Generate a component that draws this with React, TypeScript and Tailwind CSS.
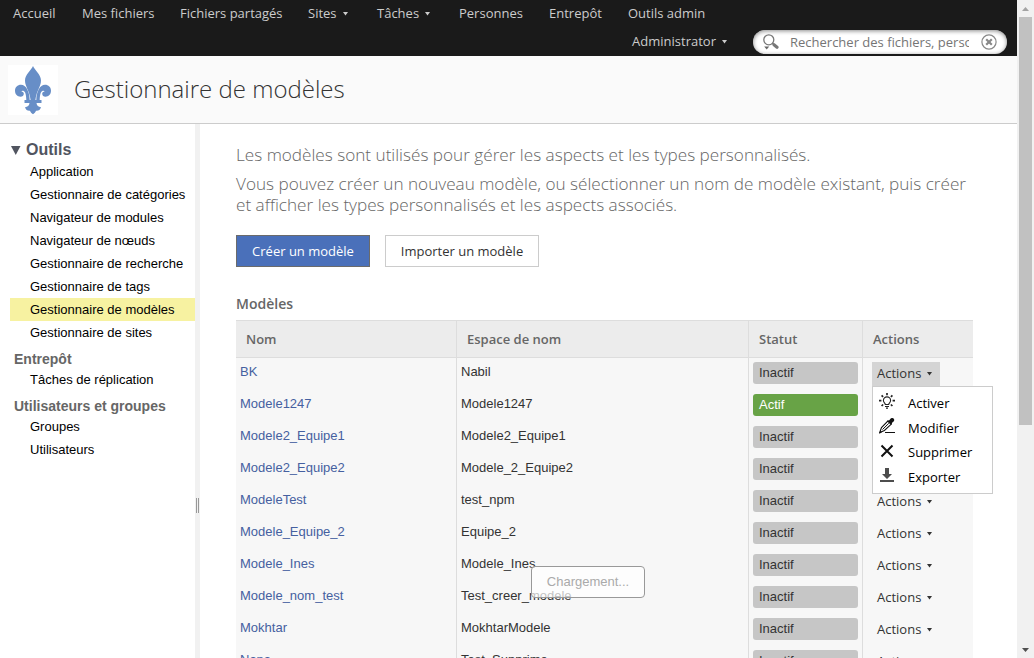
import React from "react";

const OPEN = "font-['Open_Sans',sans-serif]";
const ARIAL = "font-['Liberation_Sans',Arial,sans-serif]";

function Caret({ className = "" }: { className?: string }) {
  return (
    <svg width="5" height="4" viewBox="0 0 5 4" className={className} fill="currentColor">
      <path d="M0 0h5L2.500 3.500z" />
    </svg>
  );
}

const navItems = [
  { label: "Accueil", width: "w-[69px]" },
  { label: "Mes fichiers", width: "w-[98px]" },
  { label: "Fichiers partagés", width: "w-[128px]" },
  { label: "Sites", width: "w-[69px]", menu: true },
  { label: "Tâches", width: "w-[82px]", menu: true },
  { label: "Personnes", width: "w-[90px]" },
  { label: "Entrepôt", width: "w-[79px]" },
  { label: "Outils admin", width: "w-[90px]" },
];

function TopBar() {
  return (
    <header className={`${OPEN} h-14 bg-[#1a1a1a] text-[13px] text-[#ccc]`}>
      <nav className="flex h-7 pb-[2px] pl-[13px]">
        {navItems.map((n) => (
          <a key={n.label} className={`flex shrink-0 items-center whitespace-nowrap leading-[26px] ${n.width}`}>
            {n.label}
            {n.menu && <Caret className="ml-[6px] mt-px" />}
          </a>
        ))}
      </nav>
      <div className="flex h-7 items-center justify-end pr-[10px]">
        <a className="mr-[26px] flex items-center pb-[2px] leading-[26px]">
          Administrator
          <Caret className="ml-[6px] mt-px" />
        </a>
        <div className="flex h-6 w-[254px] items-center rounded-full bg-white pl-[10px] shadow-[inset_0_1px_4px_#888]">
          <svg width="16" height="16" viewBox="0 0 16 16" fill="none" className="shrink-0">
            <circle cx="5.800" cy="5.800" r="5" stroke="#777" strokeWidth="1.300" />
            <path d="M9.400 9.200l1.800 1.600" stroke="#777" strokeWidth="1.400" />
            <path d="M11 10.800l3 2.400" stroke="#777" strokeWidth="3.200" strokeLinecap="round" />
            <path d="M1.200 12.600h5l-2.500 2.800z" fill="#666" />
          </svg>
          <span className="ml-[11px] w-[179px] overflow-hidden whitespace-nowrap leading-5 text-[#757575]">
            Rechercher des fichiers, personnes, sites
          </span>
          <svg width="16" height="16" viewBox="0 0 16 16" fill="none" className="ml-[12px] shrink-0">
            <circle cx="8" cy="8" r="7.100" stroke="#888" strokeWidth="1.200" />
            <path d="M5.200 5.200l5.600 5.600M10.800 5.200l-5.600 5.600" stroke="#888" strokeWidth="2.200" />
          </svg>
        </div>
      </div>
    </header>
  );
}

function FleurDeLis() {
  return (
    <svg width="50" height="50" viewBox="0 0 50 50" className="bg-white" fill="#678ec7">
      <path d="M25 1c-1.500 4-8 8.500-8 14.500 0 6 4.500 10 5.600 19.500h4.800c1.100-9.500 5.600-13.500 5.600-19.500C33 9.500 26.500 5 25 1z" />
      <path d="M21.700 35c-.2-8.500-3.600-15.200-8.700-15.200-3.500 0-6 2.500-6 6 0 3.500 2.500 5.900 5.500 5.900 1.900 0 3.300-1.100 3.300-2.900 0-1.400-1-2.200-2.400-2.300.3-1.300 2.700-1.200 3.700 1 .8 1.900 1.200 4.700 1.200 7.500z" />
      <path d="M28.300 35c.2-8.500 3.600-15.200 8.700-15.200 3.500 0 6 2.500 6 6 0 3.500-2.500 5.900-5.500 5.900-1.900 0-3.300-1.100-3.300-2.900 0-1.400 1-2.200 2.400-2.300-.3-1.300-2.700-1.200-3.700 1-.8 1.900-1.200 4.700-1.200 7.500z" />
      <path d="M16.500 35h17v3h-17z" />
      <path d="M21.500 38h7c.3 2.500 1.800 3.800 4.500 4.200-.8 2.600-2.500 3.800-5 3.500-.5 1.300-1.600 2.500-3 3.600-1.400-1.100-2.500-2.300-3-3.600-2.500.3-4.200-.9-5-3.500 2.700-.4 4.200-1.700 4.500-4.200z" />
    </svg>
  );
}

const toolItems = [
  "Application",
  "Gestionnaire de catégories",
  "Navigateur de modules",
  "Navigateur de nœuds",
  "Gestionnaire de recherche",
  "Gestionnaire de tags",
  "Gestionnaire de modèles",
  "Gestionnaire de sites",
];

function SideItem({ label, active = false }: { label: string; active?: boolean }) {
  return (
    <li className={`h-[23px] whitespace-nowrap pl-5 text-[13px] leading-[23px] text-black ${active ? "bg-[#f7f2a1]" : ""}`}>
      {label}
    </li>
  );
}

function Sidebar() {
  return (
    <aside className={`${ARIAL} w-[195px] shrink-0 pl-[10px] pt-[15px]`}>
      <h2 className="flex h-[21px] items-center text-[16px] font-bold leading-[21px] text-[#515560]">
        <svg width="10" height="9" viewBox="0 0 10 9" fill="#515560" className="ml-px mr-[5px] mt-[2px]">
          <path d="M0 0h9.500L4.750 9z" />
        </svg>
        Outils
      </h2>
      <ul>
        {toolItems.map((t) => (
          <SideItem key={t} label={t} active={t === "Gestionnaire de modèles"} />
        ))}
      </ul>
      <h3 className="h-6 whitespace-nowrap pl-[4px] pt-[3px] text-[14px] font-bold leading-[24px] text-[#666]">Entrepôt</h3>
      <ul>
        <SideItem label="Tâches de réplication" />
      </ul>
      <h3 className="h-6 whitespace-nowrap pl-[4px] pt-[3px] text-[14px] font-bold leading-[24px] text-[#666]">Utilisateurs et groupes</h3>
      <ul>
        <SideItem label="Groupes" />
        <SideItem label="Utilisateurs" />
      </ul>
    </aside>
  );
}

const models = [
  { name: "BK", ns: "Nabil", active: false },
  { name: "Modele1247", ns: "Modele1247", active: true },
  { name: "Modele2_Equipe1", ns: "Modele2_Equipe1", active: false },
  { name: "Modele2_Equipe2", ns: "Modele_2_Equipe2", active: false },
  { name: "ModeleTest", ns: "test_npm", active: false },
  { name: "Modele_Equipe_2", ns: "Equipe_2", active: false },
  { name: "Modele_Ines", ns: "Modele_Ines", active: false },
  { name: "Modele_nom_test", ns: "Test_creer_modele", active: false },
  { name: "Mokhtar", ns: "MokhtarModele", active: false },
  { name: "Nana", ns: "Test_Supprime", active: false },
];

const COLS = "grid grid-cols-[220px_292px_114px_111px]";

function ActionsMenu() {
  const row = "flex items-center pl-[6px]";
  return (
    <div className={`${OPEN} absolute left-0 top-6 z-10 h-[108px] w-[121px] border border-[#ccc] bg-white text-[13px] text-black`}>
      <div className={`${row} h-[33px]`}>
        <svg width="16" height="16" viewBox="0 0 16 16" fill="none" stroke="#222" className="-mt-[5px] mr-[13px]">
          <path d="M6.300 11.500c0-1.500-1.900-2-1.900-4a3.600 3.600 0 0 1 7.200 0c0 2-1.900 2.500-1.900 4z" strokeWidth="1.100" />
          <path d="M6 13.500h4M7 15.200h2" strokeWidth="1.200" />
          <path d="M8 0v2.200M2.600 2.300l1.500 1.500M13.400 2.300l-1.500 1.500M0 7.700h2.400M13.600 7.700H16M2.600 13l1.500-1.500M13.400 13l-1.500-1.500" strokeWidth="1.700" />
        </svg>
        Activer
      </div>
      <div className={`${row} h-[17px]`}>
        <svg width="16" height="16" viewBox="0 0 16 16" fill="none" stroke="#111" className="-mt-[5px] mr-[13px]">
          <path d="M.7 14.500l1.800-5L8.800 3l3.300 3.300-6.700 6.200z" strokeWidth="1.100" />
          <path d="M3.500 11.500l6.300-6.200M.5 15l2-.7" strokeWidth="1" />
          <path d="M8.200 2.800l2.100-.5 1.400-1.700c.8-.9 2.100-.8 2.900 0s.9 2.100 0 2.900l-1.500 1.300-.4 2z" fill="#111" stroke="none" />
          <path d="M6 14.500h10" strokeWidth="1" />
        </svg>
        Modifier
      </div>
      <div className={`${row} h-[32px]`}>
        <svg width="16" height="16" viewBox="0 0 16 16" fill="none" stroke="#111" className="-mt-[5px] mr-[13px]">
          <path d="M2.500 2.500l11 11M13.500 2.500l-11 11" strokeWidth="2" />
        </svg>
        Supprimer
      </div>
      <div className={`${row} h-[17px]`}>
        <svg width="16" height="16" viewBox="0 0 16 16" fill="#4d4d4d" className="-mt-[5px] mr-[13px]">
          <path d="M6 1h4v6h3l-5 5-5-5h3zM1 13h14v2H1z" />
        </svg>
        Exporter
      </div>
    </div>
  );
}

function ModelsTable() {
  return (
    <div className="w-[737px]">
      <div className={`${COLS} ${OPEN} h-[38px] border-y border-[#ddd] bg-[#ececec] text-[13px] font-semibold leading-[36px] text-[#666]`}>
        <div className="pl-[10px]">Nom</div>
        <div className="border-l border-[#ddd] pl-[10px]">Espace de nom</div>
        <div className="border-l border-[#ddd] pl-[10px]">Statut</div>
        <div className="border-l border-[#ddd] pl-[10px]">Actions</div>
      </div>
      {models.map((m, i) => (
        <div key={m.name} className={`${COLS} ${ARIAL} h-8 bg-[#f7f7f7] text-[13px] text-[#333]`}>
          <div className="pl-[4px] leading-[27px] text-[#4560a0]">{m.name}</div>
          <div className="border-l border-[#ddd] pl-[4px] leading-[27px]">{m.ns}</div>
          <div className="border-l border-[#ddd] pl-[4px] pt-[4px]">
            <div
              className={`h-[22px] w-[105px] rounded-[3px] pl-[6px] leading-[21px] ${
                m.active ? "bg-[#68a346] text-white" : "bg-[#c6c6c6]"
              }`}
            >
              {m.active ? "Actif" : "Inactif"}
            </div>
          </div>
          <div className="border-l border-[#ddd] pl-[9px] pt-[4px]">
            <div className={`${OPEN} relative flex h-6 w-[68px] items-center pl-[5px] ${i === 0 ? "bg-[#d4d4d4]" : ""}`}>
              Actions
              <Caret className="ml-[6px]" />
              {i === 0 && <ActionsMenu />}
            </div>
          </div>
        </div>
      ))}
    </div>
  );
}

function Scrollbar() {
  return (
    <div className="flex h-[658px] w-[17px] shrink-0 flex-col items-center bg-[#f1f1f1]">
      <div className="flex h-[17px] items-center">
        <svg width="7" height="4" viewBox="0 0 7 4" fill="#a3a3a3">
          <path d="M0 4h7L3.500 0z" />
        </svg>
      </div>
      <div className="h-[408px] w-[13px] bg-[#c1c1c1]" />
      <div className="mt-auto flex h-[17px] items-center">
        <svg width="7" height="4" viewBox="0 0 7 4" fill="#505050">
          <path d="M0 0h7L3.500 4z" />
        </svg>
      </div>
    </div>
  );
}

export default function App() {
  return (
    <div className="relative flex h-[658px] w-[1034px] overflow-hidden bg-white">
      <div className="flex w-[1017px] flex-col">
        <TopBar />
        <div className="flex h-[68px] shrink-0 items-center border-b border-[#ccc] bg-[#fafafa] pl-2">
          <FleurDeLis />
          <h1 className={`${OPEN} mb-[2px] ml-4 text-[24px] font-light leading-[34px] text-[#333]`}>Gestionnaire de modèles</h1>
        </div>
        <div className="flex min-h-0 flex-1 overflow-hidden">
          <Sidebar />
          <div className="flex w-[5px] shrink-0 justify-center gap-px bg-[#f1f1f1] pt-[374px]">
            <span className="h-[15px] w-px bg-[#999]" />
            <span className="h-[15px] w-px bg-[#999]" />
          </div>
          <main className="pl-9 pt-5">
            <div className={`${OPEN} text-[17.15px] font-light leading-[21px] text-[#666]`}>
              <p className="whitespace-nowrap">Les modèles sont utilisés pour gérer les aspects et les types personnalisés.</p>
              <p className="mt-2 whitespace-nowrap">
                Vous pouvez créer un nouveau modèle, ou sélectionner un nom de modèle existant, puis créer
                <br />
                et afficher les types personnalisés et les aspects associés.
              </p>
            </div>
            <div className={`${OPEN} mt-5 flex gap-[15px] text-[13px]`}>
              <button className="h-8 w-[134px] border border-[#6b6b6b] bg-[#4a70ba] pt-[2px] text-white">Créer un modèle</button>
              <button className="h-8 w-[154px] border border-[#ccc] bg-white pt-[2px] text-[#333]">Importer un modèle</button>
            </div>
            <h2 className={`${OPEN} mt-[26px] h-[27px] text-[14px] font-semibold leading-[21px] text-[#666]`}>Modèles</h2>
            <ModelsTable />
          </main>
        </div>
      </div>
      <Scrollbar />
      <div
        className={`${ARIAL} absolute left-[531px] top-[566px] flex h-8 w-[114px] items-center justify-center rounded-[4px] border border-[#999] bg-white/70 text-[13px] text-[#aaa]`}
      >
        Chargement...
      </div>
    </div>
  );
}
